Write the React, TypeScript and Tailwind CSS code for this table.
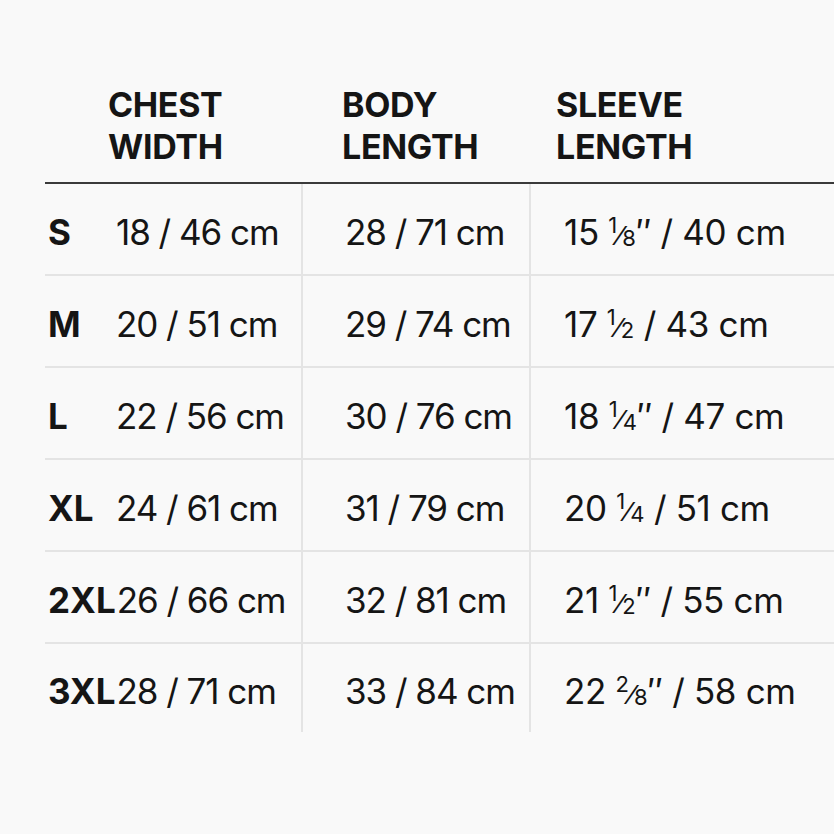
import React from "react";

type Frac = { n: string; d: string };

function Fraction({ n, d }: Frac) {
	return (
		<span className="inline-block tracking-normal">
			<span className="text-[22px] relative -top-[12px]">{n}</span>
			<span className="text-[26px]">⁄</span>
			<span className="text-[22px] relative top-[1px]">{d}</span>
		</span>
	);
}

const rows: {
	size: string;
	chest: string;
	body: string;
	sleeve: [string, Frac, string];
}[] = [
	{ size: "S", chest: "18 / 46 cm", body: "28 / 71 cm", sleeve: ["15", { n: "1", d: "8" }, "″ / 40 cm"] },
	{ size: "M", chest: "20 / 51 cm", body: "29 / 74 cm", sleeve: ["17", { n: "1", d: "2" }, " / 43 cm"] },
	{ size: "L", chest: "22 / 56 cm", body: "30 / 76 cm", sleeve: ["18", { n: "1", d: "4" }, "″ / 47 cm"] },
	{ size: "XL", chest: "24 / 61 cm", body: "31 / 79 cm", sleeve: ["20", { n: "1", d: "4" }, " / 51 cm"] },
	{ size: "2XL", chest: "26 / 66 cm", body: "32 / 81 cm", sleeve: ["21", { n: "1", d: "2" }, "″ / 55 cm"] },
	{ size: "3XL", chest: "28 / 71 cm", body: "33 / 84 cm", sleeve: ["22", { n: "2", d: "8" }, "″ / 58 cm"] },
];

export default function App() {
	return (
		<div
			className="w-[834px] h-[834px] bg-[#f9f9f9] text-[#151515] pt-[84px] pl-[45px]"
			style={{ fontFamily: "Inter, 'Liberation Sans', sans-serif" }}
		>
			{/* Header */}
			<div className="grid grid-cols-[256px_228px_1fr] border-b-2 border-[#3a3a3a] pb-[14px] text-[34px] font-bold leading-[42px] tracking-[-0.01em]">
				<div className="pl-[63px]">
					CHEST
					<br />
					WIDTH
				</div>
				<div className="pl-[41px]">
					BODY
					<br />
					LENGTH
				</div>
				<div className="pl-[27px]">
					SLEEVE
					<br />
					LENGTH
				</div>
			</div>

			{/* Rows */}
			{rows.map((r, i) => (
				<div
					key={r.size}
					className={
						i === rows.length - 1
							? "grid grid-cols-[256px_228px_1fr] h-[88px] text-[35px] tracking-[-0.03em]"
							: "grid grid-cols-[256px_228px_1fr] h-[92px] border-b-2 border-[#e4e4e4] text-[35px] tracking-[-0.03em]"
					}
				>
					<div className="flex items-center pt-[6px] pl-[3px]">
						<span className="min-w-[67px] shrink-0 font-bold tracking-normal mr-[1px]">{r.size}</span>
						<span>{r.chest}</span>
					</div>
					<div className="flex items-center pt-[6px] pl-[42px] border-l-2 border-[#e4e4e4]">{r.body}</div>
					<div className="flex items-center pt-[6px] pl-[33px] border-l-2 border-[#e4e4e4] tracking-[-0.01em]">
						<span>
							{r.sleeve[0]} <Fraction {...r.sleeve[1]} />
							{r.sleeve[2]}
						</span>
					</div>
				</div>
			))}
		</div>
	);
}
